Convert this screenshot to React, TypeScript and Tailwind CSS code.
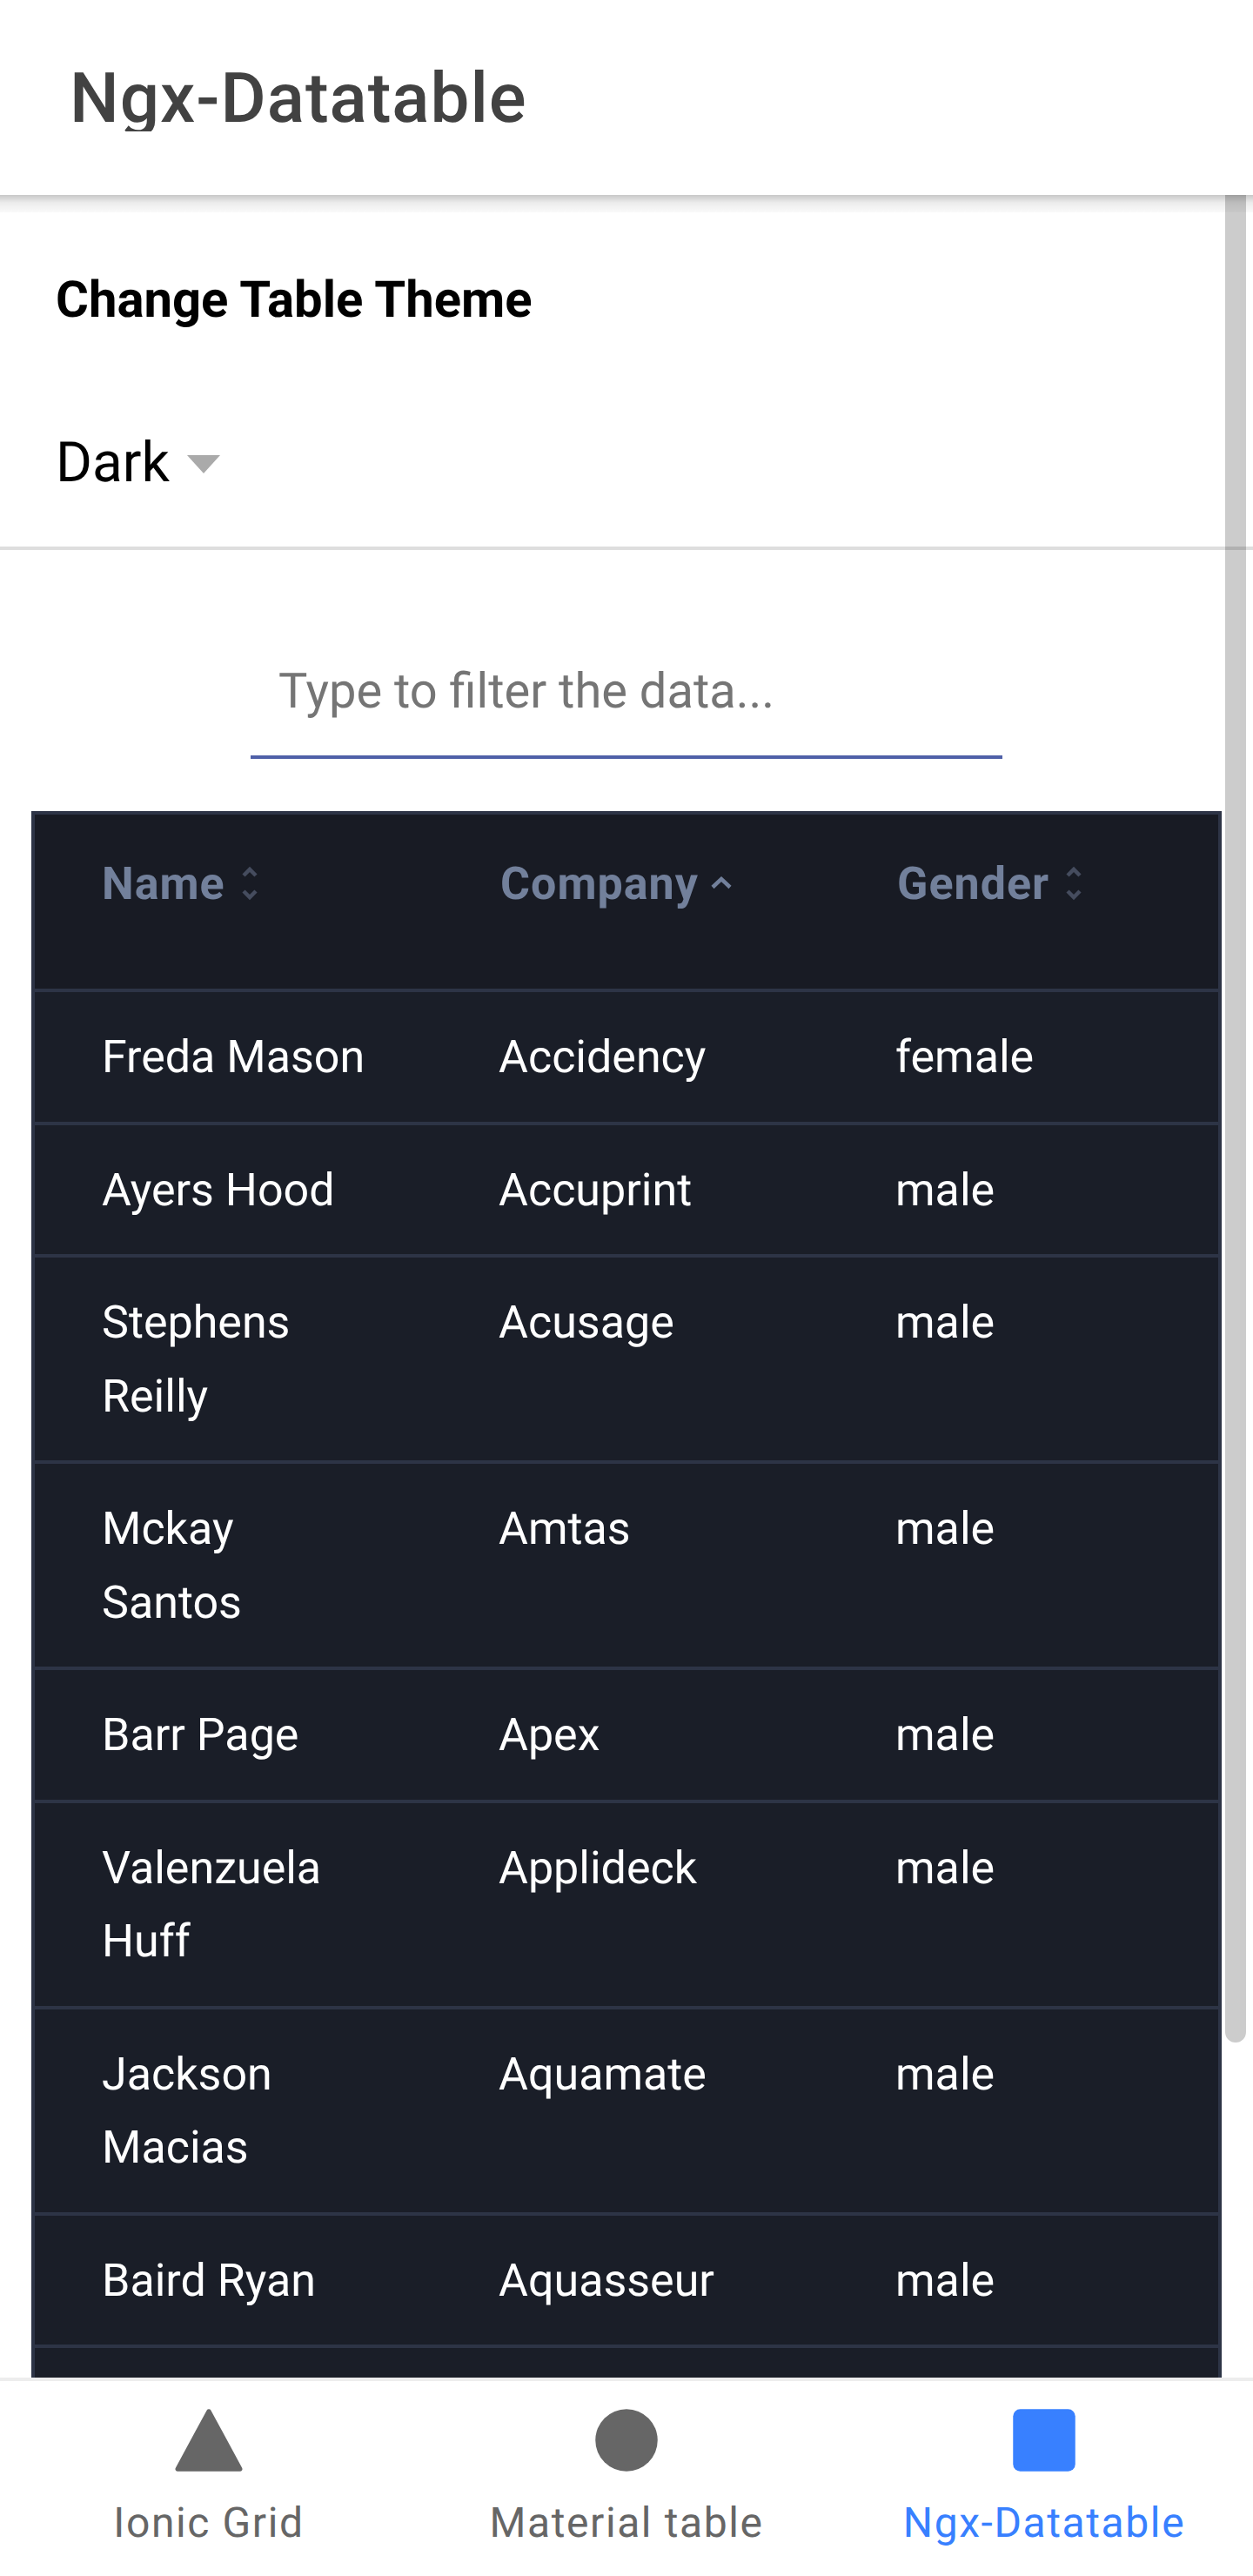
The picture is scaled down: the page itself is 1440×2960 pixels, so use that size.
import React from "react";

const rows: [string[], string, string][] = [
  [["Freda Mason"], "Accidency", "female"],
  [["Ayers Hood"], "Accuprint", "male"],
  [["Stephens", "Reilly"], "Acusage", "male"],
  [["Mckay", "Santos"], "Amtas", "male"],
  [["Barr Page"], "Apex", "male"],
  [["Valenzuela", "Huff"], "Applideck", "male"],
  [["Jackson", "Macias"], "Aquamate", "male"],
  [["Baird Ryan"], "Aquasseur", "male"],
];

function Sort({ mode }: { mode: "both" | "up" }) {
  if (mode === "up") {
    return (
      <svg width="26" height="18" viewBox="0 0 26 18" fill="none" className="mt-[32px] ml-[13px] shrink-0">
        <path d="M3 13.5 13 4 23 13.5" stroke="#72809b" strokeWidth="4.5" />
      </svg>
    );
  }
  return (
    <svg width="18" height="42" viewBox="0 0 18 42" fill="none" className="mt-[20px] ml-[19px] shrink-0">
      <path d="M2 12 9 5 16 12M2 30 9 37 16 30" stroke="#454c5e" strokeWidth="4.5" />
    </svg>
  );
}

function HeaderCell({ label, mode, width }: { label: string; mode: "both" | "up"; width: string }) {
  return (
    <div className={width + " pl-[77px] pt-[38px] flex items-start"}>
      <span className="text-[52px] leading-[84px] font-bold tracking-[1px] text-[#72809b]">{label}</span>
      <Sort mode={mode} />
    </div>
  );
}

function Tab({ label, active, icon }: { label: string; active?: boolean; icon: React.ReactNode }) {
  return (
    <div className={"flex-1 flex flex-col items-center pt-[24px] " + (active ? "text-[#3880ff]" : "text-[#666666]")}>
      <svg width="88" height="88" viewBox="0 0 512 512" fill="currentColor">
        {icon}
      </svg>
      <div className="text-[48px] leading-[56px] tracking-[1.6px] mt-[23px]">{label}</div>
    </div>
  );
}

export default function App() {
  return (
    <div className="w-[1440px] h-[2960px] overflow-hidden flex flex-col bg-white font-[Roboto,sans-serif] [text-rendering:geometricPrecision]">
      <header className="h-[224px] shrink-0 bg-white pl-[80px] pt-[72px] relative z-10">
        <div className="h-[79px] overflow-hidden text-[80px] leading-[83px] font-medium text-[#424242] tracking-[1px]">
          Ngx-Datatable
        </div>
      </header>

      <main className="flex-1 min-h-0 overflow-hidden relative">
        <div className="absolute inset-x-0 top-0 h-[20px] z-10 bg-[linear-gradient(to_bottom,#c8c8c8,#ececec_45%,#fafafa_100%)]" />
        <div className="absolute right-[8px] top-0 w-[24px] h-[2123px] rounded-b-[12px] bg-black/20 z-20" />

        <section className="h-[408px] border-b-[4px] border-[#dedede] pl-[64px] pt-[88px]">
          <div className="text-[58px] leading-[66px] font-bold text-black">Change Table Theme</div>
          <div className="mt-[116px] flex items-center">
            <span className="text-[64px] leading-[75px] text-black">Dark</span>
            <svg width="38" height="21" viewBox="0 0 38 21" className="ml-[20px] mt-[4px]">
              <path d="M0 0H38L19 21Z" fill="#aaaaaa" />
            </svg>
          </div>
        </section>

        <div className="mx-auto mt-[80px] w-[864px] h-[160px] border-b-[4px] border-[#4f60a8] pl-[32px] pt-[49px]">
          <div className="text-[56px] leading-[66px] text-[#757575]">Type to filter the data...</div>
        </div>

        <div className="ml-[36px] mt-[60px] w-[1368px] border-[4px] border-[#2d3446] border-b-0 bg-[#1a1e28]">
          <div className="h-[204px] flex bg-[#181b24] border-b-[4px] border-[#2d3446]">
            <HeaderCell label="Name" mode="both" width="w-[458px]" />
            <HeaderCell label="Company" mode="up" width="w-[456px]" />
            <HeaderCell label="Gender" mode="both" width="w-[446px]" />
          </div>
          {rows.map((r) => (
            <div key={r[0].join(" ")} className="flex border-b-[4px] border-[#2d3446] pt-[33px] pb-[31px] text-[52px] leading-[84.5px] text-white">
              <div className="w-[456px] pl-[77px]">
                {r[0].map((l) => (
                  <div key={l}>{l}</div>
                ))}
              </div>
              <div className="w-[456px] pl-[77px]">{r[1]}</div>
              <div className="w-[448px] pl-[77px]">{r[2]}</div>
            </div>
          ))}
          <div className="h-[200px]" />
        </div>
      </main>

      <footer className="h-[228px] shrink-0 border-t-[4px] border-[#ededed] bg-white flex relative z-30">
        <Tab label="Ionic Grid" icon={<path d="M464 464H48a16 16 0 01-14-24L242 56a16 16 0 0128 0l208 384a16 16 0 01-14 24z" />} />
        <Tab label="Material table" icon={<circle cx="256" cy="256" r="208" />} />
        <Tab label="Ngx-Datatable" active icon={<path d="M416 464H96a48.05 48.05 0 01-48-48V96a48.05 48.05 0 0148-48h320a48.05 48.05 0 0148 48v320a48.05 48.05 0 01-48 48z" />} />
      </footer>
    </div>
  );
}
